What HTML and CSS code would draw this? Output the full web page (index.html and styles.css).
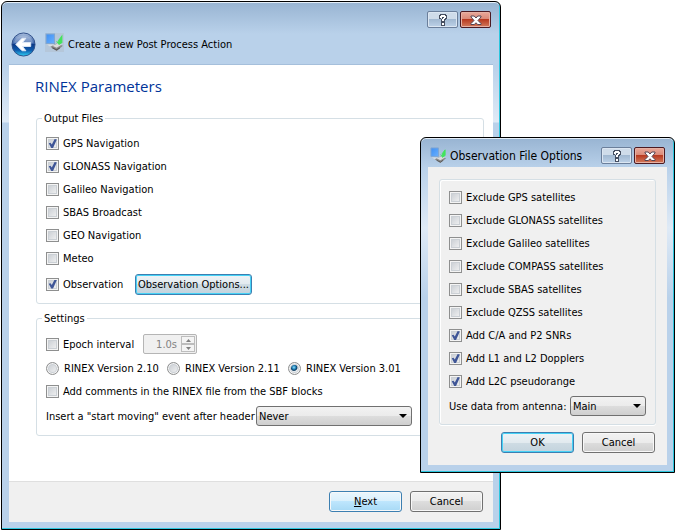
FILE: index.html
```html
<!DOCTYPE html>
<html lang="en">
<head>
<meta charset="utf-8">
<title>Create a new Post Process Action</title>
<link rel="stylesheet" href="styles.css">
</head>
<body>
<svg class="defs" aria-hidden="true">
  <defs>
    <linearGradient id="orb" x1="0" y1="0" x2="0" y2="1">
      <stop offset="0" stop-color="#a9bddc"/><stop offset=".45" stop-color="#3c66ac"/>
      <stop offset=".5" stop-color="#0b3a88"/><stop offset=".75" stop-color="#0d5cae"/><stop offset="1" stop-color="#2fd0f4"/>
    </linearGradient>
    <linearGradient id="screen" x1="0" y1="0" x2="1" y2="1">
      <stop offset="0" stop-color="#3f8ff2"/><stop offset="1" stop-color="#69b0ff"/>
    </linearGradient>
    <symbol id="app" viewBox="0 0 18 18">
      <path d="M1 1h8v9H1z" fill="url(#screen)" stroke="#7fa6d2"/>
      <path d="M2 11h6l2 2H5z" fill="#d8dde2"/>
      <path d="M5 13l6-3 6 2-6 5z" fill="#8b8b8b"/>
      <path d="M7 12l5-2 4 1-5 3z" fill="#dcdcdc"/>
      <path d="M7 14l4 2 3-2" fill="none" stroke="#555"/>
      <path d="M11 8l2 2V7l3-4v6l-3 2" fill="#42e45c" stroke="#42e45c"/>
    </symbol>
    <symbol id="help" viewBox="0 0 12 12">
      <path d="M2 1h1V0h6v1h1v4H9v1H8v2H4V5h1V4H4v1H2zM4 8h4v4H4z" fill="#454e60"/>
      <path d="M3 2h1V1h4v1h1v2H8v1H7v2H5V5h1V4h1V3H5v1H3zM5 9h2v2H5z" fill="#fff"/>
    </symbol>
    <symbol id="close" viewBox="0 0 12 12">
      <path d="M1 2h3.200L6 4l1.800-2H11v1L8 6.500l3 3v1H7.800L6 8.800l-1.800 1.700H1v-1l3-3-3-3.500z" fill="#fff" stroke="#544553"/>
    </symbol>
  </defs>
</svg>

<main class="window wizard">
  <header class="wizard-head">
    <div class="caption">
      <button class="cap" aria-label="Help"><svg><use href="#help"/></svg></button>
      <button class="cap cap-close" aria-label="Close"><svg><use href="#close"/></svg></button>
    </div>
    <div class="wizard-title">
      <button class="back" aria-label="Back">
        <svg viewBox="0 0 26 26">
          <circle cx="13" cy="13" r="12" fill="url(#orb)" stroke="#304f88"/>
          <path d="M3 11a10.500 10.500 0 0 1 20 0q-10 4-20 0z" fill="#fff" opacity=".22"/>
          <path d="M5 13l6.500-6.500h4L12 11h8.500v4H12l3.500 4.500h-4z" fill="#fff" stroke="#dfe9f7"/>
        </svg>
      </button>
      <svg class="app-icon large"><use href="#app"/></svg>
      <span>Create a new Post Process Action</span>
    </div>
  </header>

  <form class="client">
    <div class="page">
      <h1>RINEX Parameters</h1>
      <fieldset class="output">
        <legend>Output Files</legend>
        <label><input type="checkbox" checked>GPS Navigation</label>
        <label><input type="checkbox" checked>GLONASS Navigation</label>
        <label><input type="checkbox">Galileo Navigation</label>
        <label><input type="checkbox">SBAS Broadcast</label>
        <label><input type="checkbox">GEO Navigation</label>
        <label><input type="checkbox">Meteo</label>
        <div class="row taller">
          <label class="observation"><input type="checkbox" checked>Observation</label>
          <button type="button" class="btn focus snug">Observation Options...</button>
        </div>
      </fieldset>
      <fieldset class="settings">
        <legend>Settings</legend>
        <div class="row tall">
          <label class="epoch"><input type="checkbox">Epoch interval</label>
          <div class="spin">
            <input type="text" value="1.0s" disabled aria-label="Epoch interval value">
            <div class="arrows">
              <button type="button" disabled aria-label="Increase"><svg viewBox="0 0 5 3"><path d="M0 3h5L2.500 0z"/></svg></button>
              <button type="button" disabled aria-label="Decrease"><svg viewBox="0 0 5 3"><path d="M0 0h5L2.500 3z"/></svg></button>
            </div>
          </div>
        </div>
        <div class="row radios">
          <label><input type="radio" name="version">RINEX Version 2.10</label>
          <label><input type="radio" name="version">RINEX Version 2.11</label>
          <label><input type="radio" name="version" checked>RINEX Version 3.01</label>
        </div>
        <label><input type="checkbox">Add comments in the RINEX file from the SBF blocks</label>
        <div class="row tall">
          <label class="insert" for="moving">Insert a "start moving" event after header</label>
          <div class="combo combo-wide"><select id="moving"><option>Never</option></select></div>
        </div>
      </fieldset>
    </div>
    <footer class="actions wizard-actions">
      <button type="button" class="btn hot"><span class="key">N</span>ext</button>
      <button type="button" class="btn">Cancel</button>
    </footer>
  </form>
</main>

<section class="window dialog" role="dialog" aria-labelledby="dialog-title">
  <header class="dialog-head">
    <svg class="app-icon"><use href="#app"/></svg>
    <h2 id="dialog-title">Observation File Options</h2>
    <div class="caption">
      <button class="cap" aria-label="Help"><svg><use href="#help"/></svg></button>
      <button class="cap cap-close" aria-label="Close"><svg><use href="#close"/></svg></button>
    </div>
  </header>
  <form class="client dialog-client">
    <fieldset class="options">
      <label><input type="checkbox">Exclude GPS satellites</label>
      <label><input type="checkbox">Exclude GLONASS satellites</label>
      <label><input type="checkbox">Exclude Galileo satellites</label>
      <label><input type="checkbox">Exclude COMPASS satellites</label>
      <label><input type="checkbox">Exclude SBAS satellites</label>
      <label><input type="checkbox">Exclude QZSS satellites</label>
      <label><input type="checkbox" checked>Add C/A and P2 SNRs</label>
      <label><input type="checkbox" checked>Add L1 and L2 Dopplers</label>
      <label><input type="checkbox" checked>Add L2C pseudorange</label>
      <div class="row tall">
        <label class="antenna" for="antenna">Use data from antenna:</label>
        <div class="combo"><select id="antenna"><option>Main</option></select></div>
      </div>
    </fieldset>
    <div class="actions">
      <button type="button" class="btn focus">OK</button>
      <button type="button" class="btn">Cancel</button>
    </div>
  </form>
</section>
</body>
</html>
```

FILE: styles.css
```css
* { box-sizing: border-box; }

body {
  margin: 0;
  padding: 1px;
  position: relative;
  background: #fff;
  color: #000;
  font: 11px/13px "DejaVu Sans Condensed", "DejaVu Sans", sans-serif;
}

button, input, select { font: inherit; color: inherit; margin: 0; }
.defs { position: absolute; width: 0; height: 0; }

/* Window frames */
.window {
  border: 1px solid #000;
  border-radius: 6px 6px 0 0;
  padding: 0 7px 7px;
  background: linear-gradient(#98b4d2 0, #b9d1ea 32px, #b9d1ea 64px, #dfeaf6 120px, #b9d1ea 121px);
  box-shadow: inset -1px -1px #2cc6de, inset 0 1px #e4eef8;
}
.wizard { max-width: 500px; }
.dialog {
  position: absolute;
  left: 420px;
  top: 137px;
  width: 255px;
  background: linear-gradient(#98b4d2 0, #b9d1ea 30px, #dfeaf6 90px, #b9d1ea 160px);
}
.client { display: block; background: #fff; }

.caption { display: flex; gap: 2px; margin-left: auto; }
.cap {
  display: flex;
  align-items: center;
  justify-content: center;
  width: 31px;
  height: 17px;
  padding: 0;
  border: 1px solid #6b7f9b;
  border-radius: 2px;
  background: linear-gradient(#cfdcea 0 50%, #a2b9d2 50%, #bdd2e8);
  box-shadow: inset 0 0 0 1px #dbe6f2;
}
.cap svg { width: 12px; height: 12px; }
.cap-close {
  border-color: #4c1a22;
  background: linear-gradient(#e9a99b, #d98775 50%, #b83a20 50%, #d27a5c);
  box-shadow: inset 0 0 0 1px #e6b1a4;
}

.wizard-head { padding-top: 9px; height: 63px; border-bottom: 1px solid #a5bfdb; }
.wizard-head .caption { justify-content: flex-end; padding-right: 2px; }
.wizard-title { display: flex; align-items: center; height: 33px; padding-left: 2px; }
.back { width: 25px; height: 25px; padding: 0; border: 0; background: none; }
.back svg { display: block; width: 25px; height: 25px; }
.app-icon { flex: none; width: 17px; height: 17px; }
.large { width: 19px; height: 19px; margin: 0 4px 4px 9px; background: #b5c7da; }

.dialog-head { display: flex; align-items: center; height: 29px; padding: 6px 2px 0; }
.dialog-head h2 { margin: 0 0 0 3px; white-space: nowrap; font: 12px/16px "DejaVu Sans Condensed", sans-serif; }

/* Wizard page */
.page { padding: 10px 9px 45px 27px; }
h1 { margin: 0 0 15px -1px; font: 15px/22px "Open Sans", sans-serif; color: #003399; }

fieldset {
  min-width: 0;
  margin: 0;
  border: 1px solid #d5dfe5;
  border-radius: 3px;
  padding: 0 9px;
}
legend { margin-left: -4px; padding: 0 2px; line-height: 13px; }
.output { padding-bottom: 5px; margin-bottom: 8px; padding-top: 7px; }
.settings { padding-top: 6px; padding-bottom: 6px; }

label { display: flex; align-items: center; height: 23px; white-space: nowrap; }
.row { display: flex; align-items: center; height: 23px; }
.tall { height: 26px; }
.taller { height: 28px; }

input[type="checkbox"], input[type="radio"] {
  appearance: none;
  flex: none;
  width: 13px;
  height: 13px;
  margin-right: 4px;
  border: 1px solid #8e8f8f;
  background: linear-gradient(135deg, #c4c9cf, #f6f6f6);
  box-shadow: inset 0 0 0 1px #f4f4f4, inset 0 0 0 2px #cbd0d5;
}
input[type="checkbox"]:checked::after {
  content: "";
  display: block;
  width: 9px;
  height: 9px;
  margin: 1px;
  background: #3f5697;
  clip-path: polygon(8% 48%, 28% 42%, 42% 62%, 74% 0, 98% 6%, 56% 100%, 36% 100%);
}
input[type="radio"] { border-radius: 50%; margin-right: 5px; }
input[type="radio"]:checked {
  background: radial-gradient(circle at 45% 40%, #8fe0fb 0, #1a78b0 2px, #0b3a5e 3px, #e8ecef 4px);
}
.radios label { flex: none; width: 121px; }
.observation { width: 89px; }
.epoch { width: 97px; }
.insert { width: 210px; }
.antenna { width: 121px; }

/* Push buttons */
.btn {
  width: 73px;
  height: 21px;
  padding: 0;
  border: 1px solid #707070;
  border-radius: 3px;
  background: linear-gradient(#f2f2f2, #ebebeb 50%, #dddddd 50%, #cfcfcf);
  box-shadow: inset 0 0 0 1px #f8f8f8;
  white-space: nowrap;
}
.focus {
  border-color: #3c7fb1;
  background: linear-gradient(#eef3f6, #e2eaef 50%, #cfdce4 50%, #c3d3dd);
  box-shadow: inset 0 0 0 1px #46d2f6;
}
.hot { border-color: #3c7fb1; background: linear-gradient(#eaf6fd, #d9f0fc 50%, #bee6fd 50%, #a7d9f5); }
.snug { width: 117px; }
.key { text-decoration: underline; }

.actions { display: flex; justify-content: flex-end; gap: 8px; }
.wizard-actions { padding: 9px 10px 10px; border-top: 1px solid #dfdfdf; background: #f0f0f0; }

/* Combo and spin boxes */
.combo { position: relative; width: 76px; height: 20px; }
.combo-wide { width: 156px; }
.combo select {
  appearance: none;
  display: block;
  width: 100%;
  height: 20px;
  padding: 0 16px 0 2px;
  border: 1px solid #707070;
  border-radius: 3px;
  background: linear-gradient(#f2f2f2, #ebebeb 50%, #dddddd 50%, #cfcfcf);
}
.combo::after {
  content: "";
  position: absolute;
  right: 5px;
  top: 8px;
  border: 4px solid transparent;
  border-top-color: #000;
  border-bottom: 0;
  pointer-events: none;
}
.spin { display: flex; width: 54px; height: 20px; padding: 1px; border: 1px solid #b5b5b5; border-radius: 2px; background: #f0f0f0; }
.spin input { flex: 1; min-width: 0; padding: 0 4px 0 0; border: 0; background: none; color: #838383; text-align: right; }
.arrows { display: flex; flex-direction: column; width: 14px; }
.arrows button { display: flex; flex: 1; align-items: center; justify-content: center; padding: 0; border: 1px solid #bdbdbd; background: #f4f4f4; }
.arrows svg { width: 5px; height: 3px; fill: #808080; }

/* Options dialog */
.dialog-client { padding: 12px 11px; background: #f0f0f0; }
.dialog .actions { padding-right: 1px; }
.options { padding: 6px 9px 5px; box-shadow: inset 1px 1px #fff, 0 1px #fff; margin-bottom: 7px; }
```
